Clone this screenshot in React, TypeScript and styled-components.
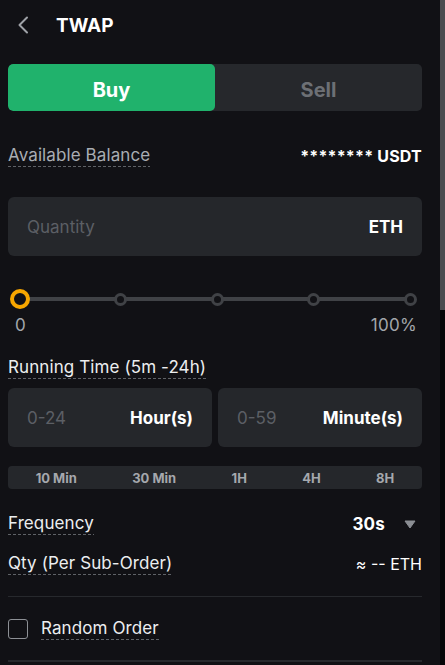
import React from "react";
import styled, { createGlobalStyle } from "styled-components";

const GlobalStyle = createGlobalStyle`
  html, body {
    margin: 0;
    padding: 0;
    background: #111115;
  }
  body {
    font-family: Inter, "Liberation Sans", sans-serif;
    color: #f2f3f5;
  }
  * {
    box-sizing: border-box;
  }
`;

const Page = styled.div`
  position: relative;
  height: 100vh;
  overflow: hidden;
  background: #111115;
`;

// the page scrollbar, drawn over the right edge
const ScrollTrack = styled.div`
  position: absolute;
  top: 0;
  right: 0;
  bottom: 0;
  width: 5px;
  background: #060608;
`;

const ScrollThumb = styled.div`
  height: 310px;
  background: #4a4b4f;
`;

const Form = styled.div`
  padding: 0 23px 0 8px;
  display: flex;
  flex-direction: column;
`;

const Header = styled.div`
  height: 50px;
  display: flex;
  align-items: center;
  padding-left: 9px;
  gap: 27px;
`;

const Title = styled.h1`
  margin: 0;
  font-size: 19px;
  font-weight: 700;
  color: #ffffff;
`;

const SideToggle = styled.div`
  margin-top: 14px;
  height: 47px;
  display: grid;
  grid-template-columns: 1fr 1fr;
  background: #26282c;
  border-radius: 5px;
  overflow: hidden;
`;

const SideButton = styled.button<{ $active?: boolean }>`
  border: none;
  padding: 4px 0 0;
  font-family: inherit;
  font-size: 20px;
  font-weight: 700;
  border-radius: 5px;
  background: ${(p) => (p.$active ? "#20b26c" : "transparent")};
  color: ${(p) => (p.$active ? "#ffffff" : "#6d7075")};
`;

const InfoRow = styled.div<{ $top: number }>`
  margin-top: ${(p) => p.$top}px;
  height: 24px;
  display: flex;
  align-items: center;
  justify-content: space-between;
`;

const Dotted = styled.span<{ $light?: boolean }>`
  font-size: 17px;
  letter-spacing: 0.1px;
  color: ${(p) => (p.$light ? "#eceef0" : "#a9adb3")};
  padding-bottom: 2px;
  background-image: linear-gradient(to right, #5f6267 60%, transparent 0);
  background-size: 5px 1px;
  background-position: left bottom;
  background-repeat: repeat-x;
  line-height: 20px;
`;

const Strong = styled.span<{ $size?: number }>`
  font-size: ${(p) => p.$size ?? 16}px;
  font-weight: 700;
  letter-spacing: 0.2px;
  color: #ffffff;
`;

const Plain = styled.span`
  font-size: 16px;
  color: #ffffff;
`;

const Field = styled.div<{ $top?: number }>`
  margin-top: ${(p) => p.$top ?? 0}px;
  height: 59px;
  background: #25272b;
  border-radius: 6px;
  display: flex;
  align-items: center;
  justify-content: space-between;
  padding: 0 19px 0 19px;
`;

const Placeholder = styled.span`
  font-size: 17px;
  color: #5c5f65;
`;

const Unit = styled.span`
  font-size: 17px;
  font-weight: 700;
  color: #ffffff;
`;

const Slider = styled.div`
  margin-top: 33px;
  height: 20px;
  position: relative;
  display: flex;
  align-items: center;
  justify-content: space-between;
  padding: 0 5px 0 2px;
`;

const Track = styled.div`
  position: absolute;
  left: 12px;
  right: 12px;
  top: 8px;
  height: 4px;
  background: #404246;
`;

const Mark = styled.span<{ $active?: boolean }>`
  position: relative;
  width: ${(p) => (p.$active ? 20 : 13)}px;
  height: ${(p) => (p.$active ? 20 : 13)}px;
  border-radius: 50%;
  border: ${(p) => (p.$active ? "4px solid #f7a600" : "3px solid #404246")};
  background: #111115;
`;

const SliderLabels = styled.div`
  margin-top: 5px;
  display: flex;
  justify-content: space-between;
  padding: 0 5px 0 7px;
  font-size: 17px;
  letter-spacing: 0.3px;
  color: #a3a6ab;
  line-height: 22px;
`;

const TimeFields = styled.div`
  margin-top: 8px;
  display: grid;
  grid-template-columns: 1fr 1fr;
  gap: 6px;
`;

const Presets = styled.div`
  margin-top: 19px;
  height: 23px;
  background: #25272b;
  border-radius: 4px;
  display: flex;
  align-items: center;
  justify-content: space-around;
`;

const Preset = styled.span`
  font-size: 13px;
  font-weight: 700;
  color: #a5a8ad;
`;

const FreqValue = styled.div`
  display: flex;
  align-items: center;
  gap: 19px;
  padding-right: 6px;
`;

const Divider = styled.div<{ $top: number; $thick?: boolean }>`
  margin-top: ${(p) => p.$top}px;
  height: ${(p) => (p.$thick ? 2 : 1)}px;
  background: #27292d;
`;

const CheckRow = styled.label`
  margin-top: 22px;
  display: flex;
  align-items: center;
  gap: 13px;
  height: 20px;
`;

const Box = styled.span`
  width: 20px;
  height: 20px;
  border: 1.5px solid #8d9095;
  border-radius: 3px;
`;

const Back = () => (
  <svg width="12" height="18" viewBox="0 0 12 18" fill="none">
    <path
      d="M10 1.5 L2.5 9 L10 16.5"
      stroke="#9fa2a7"
      strokeWidth="2"
      strokeLinecap="round"
      strokeLinejoin="round"
    />
  </svg>
);

const Caret = () => (
  <svg width="12" height="9" viewBox="0 0 12 9">
    <path d="M1 1 H11 L6 8 Z" fill="#8b8e93" stroke="#8b8e93" strokeLinejoin="round" />
  </svg>
);

const presets = ["10 Min", "30 Min", "1H", "4H", "8H"];

export default function App() {
  return (
    <>
      <GlobalStyle />
      <Page>
        <Form>
          <Header>
            <Back />
            <Title>TWAP</Title>
          </Header>

          <SideToggle>
            <SideButton $active>Buy</SideButton>
            <SideButton>Sell</SideButton>
          </SideToggle>

          <InfoRow $top={33}>
            <Dotted>Available Balance</Dotted>
            <Strong>******** USDT</Strong>
          </InfoRow>

          <Field $top={29}>
            <Placeholder>Quantity</Placeholder>
            <Unit>ETH</Unit>
          </Field>

          <Slider>
            <Track />
            <Mark $active />
            <Mark />
            <Mark />
            <Mark />
            <Mark />
          </Slider>
          <SliderLabels>
            <span>0</span>
            <span>100%</span>
          </SliderLabels>

          <InfoRow $top={20}>
            <Dotted $light>Running Time (5m -24h)</Dotted>
          </InfoRow>

          <TimeFields>
            <Field>
              <Placeholder>0-24</Placeholder>
              <Unit>Hour(s)</Unit>
            </Field>
            <Field>
              <Placeholder>0-59</Placeholder>
              <Unit>Minute(s)</Unit>
            </Field>
          </TimeFields>

          <Presets>
            {presets.map((p) => (
              <Preset key={p}>{p}</Preset>
            ))}
          </Presets>

          <InfoRow $top={23}>
            <Dotted $light>Frequency</Dotted>
            <FreqValue>
              <Strong $size={17}>30s</Strong>
              <Caret />
            </FreqValue>
          </InfoRow>

          <InfoRow $top={16}>
            <Dotted $light>Qty (Per Sub-Order)</Dotted>
            <Plain>≈ -- ETH</Plain>
          </InfoRow>

          <Divider $top={20} />

          <CheckRow>
            <Box />
            <Dotted $light>Random Order</Dotted>
          </CheckRow>

          <Divider $top={21} $thick />
        </Form>
        <ScrollTrack>
          <ScrollThumb />
        </ScrollTrack>
      </Page>
    </>
  );
}
